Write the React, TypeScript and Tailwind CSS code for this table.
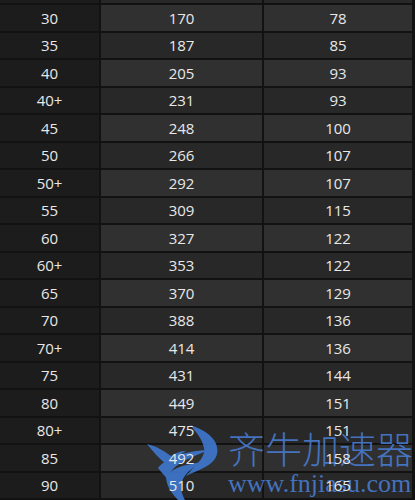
import React from "react";

const rows: [string, string, string][] = [
  ["30", "170", "78"],
  ["35", "187", "85"],
  ["40", "205", "93"],
  ["40+", "231", "93"],
  ["45", "248", "100"],
  ["50", "266", "107"],
  ["50+", "292", "107"],
  ["55", "309", "115"],
  ["60", "327", "122"],
  ["60+", "353", "122"],
  ["65", "370", "129"],
  ["70", "388", "136"],
  ["70+", "414", "136"],
  ["75", "431", "144"],
  ["80", "449", "151"],
  ["80+", "475", "151"],
  ["85", "492", "158"],
  ["90", "510", "165"],
];

export default function App() {
  return (
    <div
      className="relative w-[415px] h-[500px] overflow-hidden bg-[#121212] text-[15px] font-medium text-[#e8e8e8]"
      style={{ fontFamily: '"Open Sans", "Noto Sans", sans-serif' }}
    >
      <div className="flex h-[3px]">
        <div className="w-[99px] bg-[#1c1c1c]" />
        <div className="w-[2px] bg-[#121212]" />
        <div className="w-[161px] bg-[#282828]" />
        <div className="w-[2px] bg-[#121212]" />
        <div className="w-[148px] bg-[#282828]" />
      </div>
      {rows.map((r, i) => {
        const bg = i % 2 === 0 ? "bg-[#303030]" : "bg-[#282828]";
        return (
          <div key={i} className="flex h-[27.5px] border-t-2 border-[#121212]">
            <div className="w-[99px] bg-[#1c1c1c] flex items-center justify-center">
              <span className="relative z-10">{r[0]}</span>
            </div>
            <div className="w-[2px] bg-[#121212]" />
            <div className={`w-[161px] ${bg} flex items-center justify-center`}>
              <span className="relative z-10">{r[1]}</span>
            </div>
            <div className="w-[2px] bg-[#121212]" />
            <div className={`w-[148px] ${bg} flex items-center justify-center`}>
              <span className="relative z-10">{r[2]}</span>
            </div>
          </div>
        );
      })}

      {/* watermark */}
      <div className="pointer-events-none absolute left-[144px] top-[424px] opacity-90">
        <svg width="80" height="78" viewBox="0 0 80 78">
          <g fill="#3f78cf">
            <path d="M46 1 C62 6 76 16 73 30 C70 42 54 46 42 52 C50 42 62 34 60 24 C58 14 52 8 46 1 Z" />
            <path d="M3 20 C12 22 20 27 27 32 C31 29 36 27 42 27 C34 32 28 36 24 42 C16 35 9 28 3 20 Z" />
            <path d="M14 44 C24 32 44 27 64 26 C52 32 38 36 30 44 C26 48 24 52 24 56 C21 52 17 48 14 44 Z" />
            <path d="M22 52 C30 42 46 40 58 38 C48 44 40 50 38 58 C36 65 38 71 42 78 L36 78 C28 70 22 62 22 52 Z" />
          </g>
        </svg>
      </div>
      <div
        className="pointer-events-none absolute left-[228px] top-[430px] text-[37px] leading-none text-[#4a7fd6] opacity-85 font-light whitespace-nowrap"
        style={{ fontFamily: '"Noto Sans CJK SC", sans-serif' }}
      >
        齐牛加速器
      </div>
      <div
        className="pointer-events-none absolute left-[228px] top-[471px] text-[26px] leading-none text-[#4a7fd6] opacity-85 whitespace-nowrap"
        style={{ fontFamily: '"Liberation Serif", serif' }}
      >
        www.fnjiasu.com
      </div>
    </div>
  );
}
